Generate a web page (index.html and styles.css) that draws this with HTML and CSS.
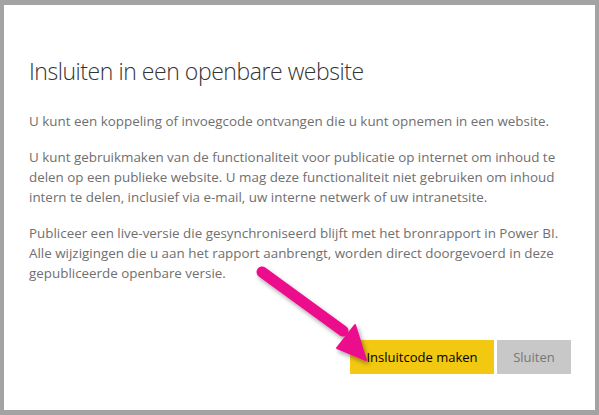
FILE: index.html
```html
<!DOCTYPE html>
<html lang="nl">
<head>
<meta charset="utf-8">
<title>Insluiten in een openbare website</title>
<link rel="stylesheet" href="styles.css">
</head>
<body>
<div class="dialog">
  <h1 class="title">Insluiten in een openbare website</h1>
  <div class="content">
    <p>U kunt een koppeling of invoegcode ontvangen die u kunt opnemen in een website.</p>
    <p>U kunt gebruikmaken van de functionaliteit voor publicatie op internet om inhoud te delen op een publieke website. U mag deze functionaliteit niet gebruiken om inhoud intern te delen, inclusief via e-mail, uw interne netwerk of uw intranetsite.</p>
    <p>Publiceer een live-versie die gesynchroniseerd blijft met het bronrapport in Power BI.<br>Alle wijzigingen die u aan het rapport aanbrengt, worden direct doorgevoerd in deze gepubliceerde openbare versie.</p>
  </div>
  <div class="actions">
    <button class="btn btn-primary">Insluitcode maken</button>
    <button class="btn btn-secondary">Sluiten</button>
  </div>
</div>
<svg class="arrow" width="599" height="415" viewBox="0 0 599 415" aria-hidden="true">
  <defs>
    <filter id="sh" x="-20%" y="-20%" width="140%" height="140%">
      <feDropShadow dx="2" dy="3" stdDeviation="2" flood-color="#000" flood-opacity="0.35"/>
    </filter>
  </defs>
  <g filter="url(#sh)" fill="#ec0b8d" stroke="#ec0b8d">
    <line x1="262" y1="272" x2="343" y2="331" stroke-width="11" stroke-linecap="round"/>
    <polygon points="337,348 355,325 366,360" stroke-width="2" stroke-linejoin="round"/>
  </g>
</svg>
</body>
</html>
```
FILE: styles.css
```css
html, body {
  margin: 0;
  padding: 0;
}
body {
  width: 599px;
  height: 415px;
  background: #a3a3a3;
  font-family: "Segoe UI", "Open Sans", "Noto Sans", sans-serif;
  position: relative;
  overflow: hidden;
}
.dialog {
  box-sizing: border-box;
  margin: 5px 4px 5px 4px;
  height: 405px;
  background: #ffffff;
  padding: 50px 24px 36px 25px;
  display: flex;
  flex-direction: column;
}
.title {
  margin: 0;
  font-size: 23px;
  font-weight: 300;
  line-height: 32px;
  color: #333333;
  letter-spacing: -0.45px;
}
.content {
  margin-top: 24px;
  flex: 1;
}
.content p {
  margin: 0 0 16px 0;
  font-size: 13.4px;
  line-height: 20px;
  color: #6f6f6f;
}
.actions {
  display: flex;
  justify-content: flex-end;
  gap: 3px;
}
.btn {
  height: 34px;
  border: 0;
  margin: 0;
  font-family: inherit;
  font-size: 13px;
  padding: 0;
}
.btn-primary {
  width: 144px;
  background: #f2c811;
  color: #000000;
}
.btn-secondary {
  width: 74px;
  background: #c8c8c8;
  color: #777777;
}
.arrow {
  position: absolute;
  left: 0;
  top: 0;
}
```
